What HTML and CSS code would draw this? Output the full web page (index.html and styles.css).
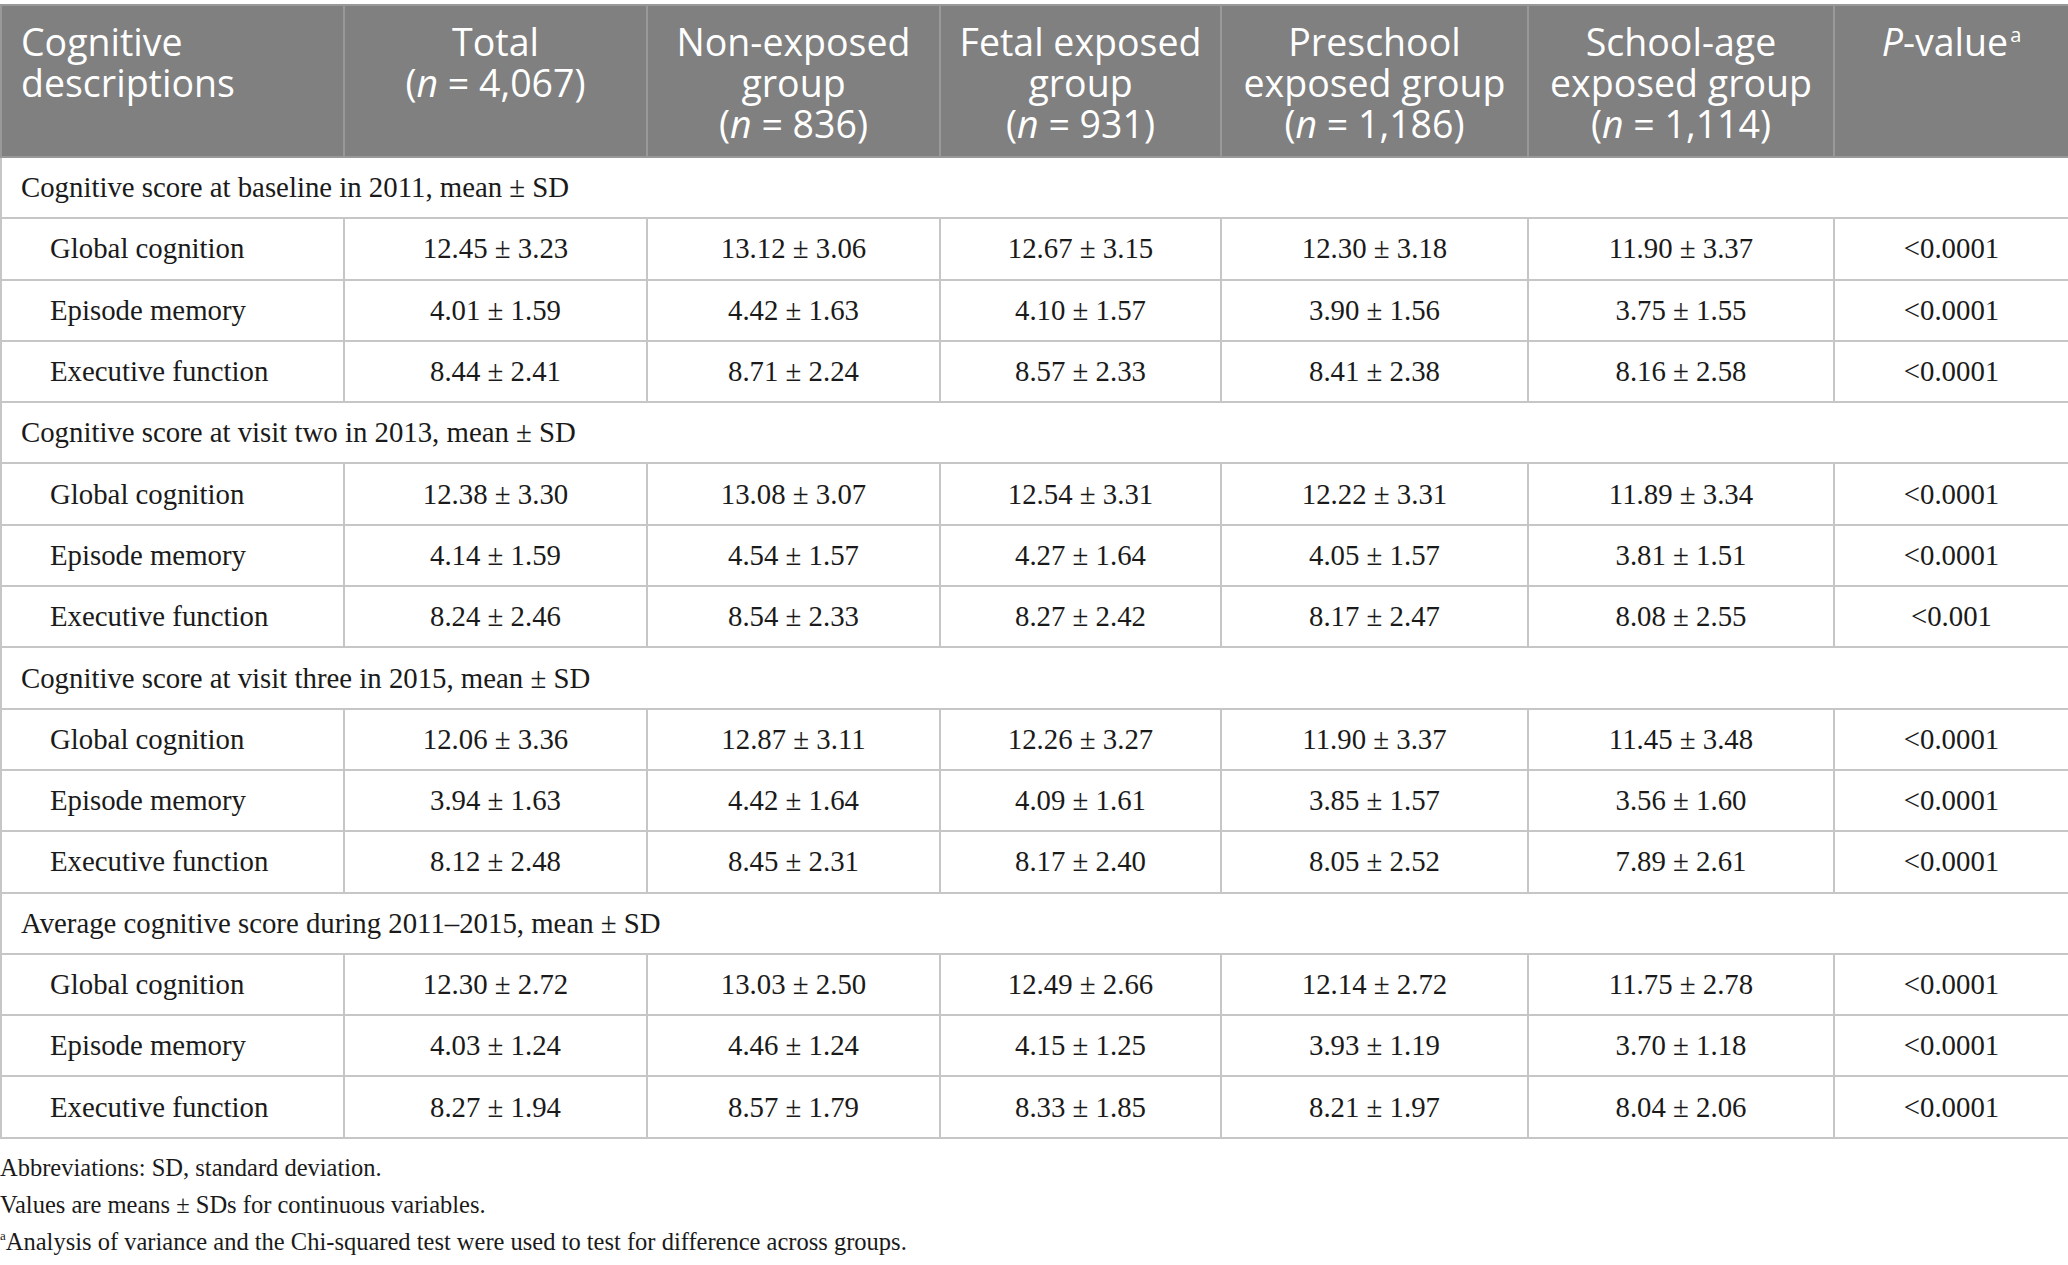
FILE: index.html
```
<!DOCTYPE html>
<html lang="en">
<head>
    <meta charset="UTF-8">
    <meta name="viewport" content="width=device-width, initial-scale=1.0">
    <title>Cognitive scores by exposure group</title>
    <link rel="stylesheet" href="styles.css">
</head>
<body>
    <table class="data-table">
        <colgroup>
            <col class="col-label">
            <col class="col-total">
            <col class="col-non">
            <col class="col-fetal">
            <col class="col-pre">
            <col class="col-school">
            <col class="col-p">
        </colgroup>
        <thead>
            <tr>
                <th class="first">Cognitive descriptions</th>
                <th>Total<br>(<i>n</i> = 4,067)</th>
                <th>Non-exposed<br>group<br>(<i>n</i> = 836)</th>
                <th>Fetal exposed<br>group<br>(<i>n</i> = 931)</th>
                <th>Preschool<br>exposed group<br>(<i>n</i> = 1,186)</th>
                <th>School-age<br>exposed group<br>(<i>n</i> = 1,114)</th>
                <th><i>P</i>-value<sup>a</sup></th>
            </tr>
        </thead>
        <tbody>
            <tr class="section"><td colspan="7">Cognitive score at baseline in 2011, mean ± SD</td></tr>
            <tr><td class="label">Global cognition</td><td>12.45 ± 3.23</td><td>13.12 ± 3.06</td><td>12.67 ± 3.15</td><td>12.30 ± 3.18</td><td>11.90 ± 3.37</td><td>&lt;0.0001</td></tr>
            <tr><td class="label">Episode memory</td><td>4.01 ± 1.59</td><td>4.42 ± 1.63</td><td>4.10 ± 1.57</td><td>3.90 ± 1.56</td><td>3.75 ± 1.55</td><td>&lt;0.0001</td></tr>
            <tr><td class="label">Executive function</td><td>8.44 ± 2.41</td><td>8.71 ± 2.24</td><td>8.57 ± 2.33</td><td>8.41 ± 2.38</td><td>8.16 ± 2.58</td><td>&lt;0.0001</td></tr>

            <tr class="section"><td colspan="7">Cognitive score at visit two in 2013, mean ± SD</td></tr>
            <tr><td class="label">Global cognition</td><td>12.38 ± 3.30</td><td>13.08 ± 3.07</td><td>12.54 ± 3.31</td><td>12.22 ± 3.31</td><td>11.89 ± 3.34</td><td>&lt;0.0001</td></tr>
            <tr><td class="label">Episode memory</td><td>4.14 ± 1.59</td><td>4.54 ± 1.57</td><td>4.27 ± 1.64</td><td>4.05 ± 1.57</td><td>3.81 ± 1.51</td><td>&lt;0.0001</td></tr>
            <tr><td class="label">Executive function</td><td>8.24 ± 2.46</td><td>8.54 ± 2.33</td><td>8.27 ± 2.42</td><td>8.17 ± 2.47</td><td>8.08 ± 2.55</td><td>&lt;0.001</td></tr>

            <tr class="section"><td colspan="7">Cognitive score at visit three in 2015, mean ± SD</td></tr>
            <tr><td class="label">Global cognition</td><td>12.06 ± 3.36</td><td>12.87 ± 3.11</td><td>12.26 ± 3.27</td><td>11.90 ± 3.37</td><td>11.45 ± 3.48</td><td>&lt;0.0001</td></tr>
            <tr><td class="label">Episode memory</td><td>3.94 ± 1.63</td><td>4.42 ± 1.64</td><td>4.09 ± 1.61</td><td>3.85 ± 1.57</td><td>3.56 ± 1.60</td><td>&lt;0.0001</td></tr>
            <tr><td class="label">Executive function</td><td>8.12 ± 2.48</td><td>8.45 ± 2.31</td><td>8.17 ± 2.40</td><td>8.05 ± 2.52</td><td>7.89 ± 2.61</td><td>&lt;0.0001</td></tr>

            <tr class="section"><td colspan="7">Average cognitive score during 2011–2015, mean ± SD</td></tr>
            <tr><td class="label">Global cognition</td><td>12.30 ± 2.72</td><td>13.03 ± 2.50</td><td>12.49 ± 2.66</td><td>12.14 ± 2.72</td><td>11.75 ± 2.78</td><td>&lt;0.0001</td></tr>
            <tr><td class="label">Episode memory</td><td>4.03 ± 1.24</td><td>4.46 ± 1.24</td><td>4.15 ± 1.25</td><td>3.93 ± 1.19</td><td>3.70 ± 1.18</td><td>&lt;0.0001</td></tr>
            <tr><td class="label">Executive function</td><td>8.27 ± 1.94</td><td>8.57 ± 1.79</td><td>8.33 ± 1.85</td><td>8.21 ± 1.97</td><td>8.04 ± 2.06</td><td>&lt;0.0001</td></tr>
        </tbody>
    </table>

    <div class="notes">
        <p>Abbreviations: SD, standard deviation.</p>
        <p>Values are means ± SDs for continuous variables.</p>
        <p><sup>a</sup>Analysis of variance and the Chi-squared test were used to test for difference across groups.</p>
    </div>
</body>
</html>
```
FILE: styles.css
```
body {
    margin: 0;
    padding: 0;
    background: #fff;
    font-family: 'Liberation Serif', 'Times New Roman', serif;
    color: #1a1a1a;
}
.data-table {
    width: 2068px;
    margin-top: 4px;
    border-collapse: collapse;
    table-layout: fixed;
}
.col-label { width: 343px; }
.col-total { width: 303px; }
.col-non { width: 293px; }
.col-fetal { width: 281px; }
.col-pre { width: 307px; }
.col-school { width: 306px; }
.col-p { width: 235px; }

th {
    background-color: #808080;
    color: #fff;
    font-family: 'Open Sans', 'Noto Sans', sans-serif;
    font-weight: normal;
    font-size: 37.5px;
    line-height: 41px;
    text-align: center;
    vertical-align: top;
    height: 152px;
    box-sizing: border-box;
    padding: 15px 6px 0;
    border: 2px solid #999;
}
th.first {
    text-align: left;
    padding-left: 19px;
}
th sup {
    font-size: 20px;
    vertical-align: top;
    line-height: 1;
    position: relative;
    top: 4px;
    margin-left: 2px;
}
td {
    font-size: 28.8px;
    height: 61.3px;
    box-sizing: border-box;
    padding: 0 8px;
    text-align: center;
    border: 2px solid #c6c6c6;
}
td.label {
    text-align: left;
    padding-left: 48px;
}
.section td {
    text-align: left;
    padding-left: 19px;
}
.notes {
    padding-top: 10px;
    font-size: 24.5px;
}
.notes p {
    margin: 0;
    line-height: 37px;
}
.notes sup {
    font-size: 13px;
    vertical-align: top;
    line-height: 1;
    position: relative;
    top: 6px;
}
```
